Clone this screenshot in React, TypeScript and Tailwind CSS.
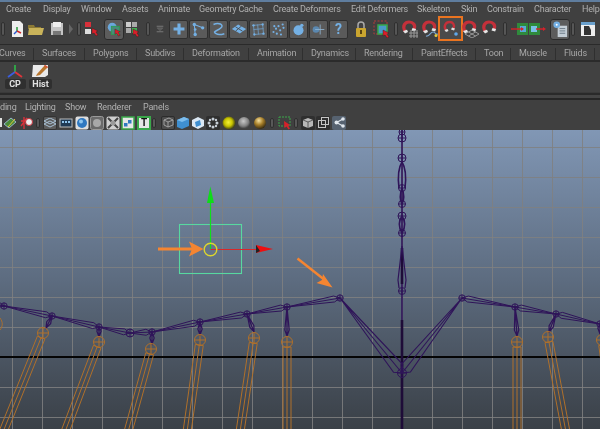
import React from "react";

type P = { children?: React.ReactNode; className?: string };

const S = ({ children, className = "", w = 18, h = 18 }: P & { w?: number; h?: number }) => (
  <svg width={w} height={h} viewBox="0 0 18 18" fill="none" className={"shrink-0 " + className}>
    {children}
  </svg>
);

const Grip = ({ className = "" }: P) => (
  <div className={"shrink-0 w-[4px] h-[14px] rounded-full bg-[#565656] border border-[#2f2f2f] " + className} />
);

const Box = ({ children, className = "" }: P) => (
  <div className={"shrink-0 w-[19px] h-[19px] flex items-center justify-center rounded-[2px] bg-[#5a5a5a] border border-[#303030] " + className}>
    {children}
  </div>
);

const Active = ({ children, className = "" }: P) => (
  <div className={"shrink-0 w-[20px] h-[21px] flex items-center justify-center rounded-[3px] bg-[#5c5c5c] border border-[#2b2b2b] " + className}>
    {children}
  </div>
);

const Blue = "#74b0e4";

const Cursor = ({ x = 10, y = 10 }: { x?: number; y?: number }) => (
  <path d={`M${x} ${y} l6 3 l-2 1 l2 3 l-2 1 l-2 -3 l-2 1 z`} fill="#d8202a" stroke="#222" strokeWidth="0.4" />
);

const MagnetShape = () => (
  <g>
    <path d="M4 11 C1 6 4 2 8 2 C12 2 15 5 13 9" stroke="#c4303a" strokeWidth="3.2" fill="none" />
    <path d="M2 11 l4 -1.2 l1 2.2 l-3 1.4 z" fill="#e6e6e6" />
    <path d="M11.5 8 l3.6 1 l-1 2.6 l-3.6 -1.2 z" fill="#e6e6e6" />
  </g>
);

const Menu = () => {
  const items: [string, string][] = [
    ["Create", "w-[37px]"],
    ["Display", "w-[38px]"],
    ["Window", "w-[41px]"],
    ["Assets", "w-[36px]"],
    ["Animate", "w-[41px]"],
    ["Geometry Cache", "w-[74px]"],
    ["Create Deformers", "w-[78px]"],
    ["Edit Deformers", "w-[66px]"],
    ["Skeleton", "w-[44px]"],
    ["Skin", "w-[26px]"],
    ["Constrain", "w-[47px]"],
    ["Character", "w-[48px]"],
    ["Help", "w-[30px]"],
  ];
  return (
    <div className="h-[15px] shrink-0 flex items-center pl-[6px] pt-[1px] bg-[#404040] text-[#b0b0b0] text-[9px] tracking-[-0.2px] whitespace-nowrap">
      {items.map(([t, w]) => (
        <span key={t} className={"shrink-0 " + w}>{t}</span>
      ))}
    </div>
  );
};

const Toolbar = () => (
  <div className="h-[28px] shrink-0 flex items-center pb-[3px] bg-[#404040] border-b border-[#2a2a2a]">
    <Grip className="ml-[1px]" />
    <S className="ml-[3px]">
      <path d="M4 1 h8 l3 3 v13 H4 z" fill="#eee" />
      <path d="M9 7 v4" stroke="#2a9a3a" strokeWidth="1.5" />
      <path d="M9 11 l-3 3" stroke="#2a5ad0" strokeWidth="1.5" />
      <path d="M9 11 l4 2" stroke="#d02a2a" strokeWidth="1.5" />
    </S>
    <S className="ml-[1px]">
      <path d="M1 5 h6 l1 2 h6 v2 H1 z" fill="#8c7a35" />
      <path d="M2 8 h15 l-2 7 H1 z" fill="#c9b35a" />
    </S>
    <S className="ml-[3px]">
      <path d="M3 3 h12 v12 H3 z" fill="#c4c4c4" />
      <path d="M5 2 h8 v5 H5 z" fill="#eee" />
      <path d="M5 11 h8 v4 H5 z" fill="#777" />
    </S>
    <div className="ml-[3px] w-[4px] h-0 border-y-[5px] border-y-transparent border-l-[4px] border-l-[#666] shrink-0" />
    <Grip className="ml-[4px]" />
    <S className="ml-[2px]">
      <rect x="2" y="2" width="6" height="5" fill="#d8303a" />
      <rect x="2" y="9" width="6" height="5" fill="#ddd" />
      <Cursor x={9} y={8} />
    </S>
    <Active className="ml-[3px]">
      <S w={16} h={16}>
        <circle cx="7" cy="7" r="5" fill="#6aa8dc" />
        <rect x="6" y="6" width="9" height="9" fill="#4a8a7a" stroke="#2aa050" />
        <Cursor x={10} y={9} />
      </S>
    </Active>
    <S>
      <rect x="2" y="2" width="5" height="5" fill="#ccc" />
      <rect x="8" y="2" width="5" height="5" fill="#aaa" />
      <rect x="2" y="8" width="5" height="5" fill="#aaa" />
      <rect x="8" y="8" width="5" height="5" fill="#3fb050" />
      <Cursor x={9} y={9} />
    </S>
    <Grip className="ml-[4px]" />
    <S w={10} h={16} className="ml-[5px]">
      <path d="M3 4 h12 M3 14 h12" stroke="#777" strokeWidth="2" />
      <path d="M4 7 h10 l-5 5 z" fill="#555" stroke="#777" />
    </S>
    <Box className="ml-[4px]">
      <S w={14} h={14}><path d="M9 2 v14 M2 9 h14" stroke={Blue} strokeWidth="4" /></S>
    </Box>
    <Box className="ml-[1px]">
      <S w={15} h={15}>
        <path d="M4 3 L5 15 M4 3 L14 7" stroke={Blue} strokeWidth="1.3" />
        <circle cx="4" cy="3" r="2" fill={Blue} /><circle cx="5" cy="15" r="2" fill={Blue} /><circle cx="14" cy="7" r="2" fill={Blue} /><circle cx="5" cy="9" r="1.6" fill={Blue} />
      </S>
    </Box>
    <Box className="ml-[1px]">
      <S w={15} h={15}><path d="M3 3 C9 0 16 3 12 7 C8 11 1 11 6 14 C9 16 13 15 16 14" stroke={Blue} strokeWidth="1.8" /></S>
    </Box>
    <Box className="ml-[1px]">
      <S w={16} h={16}><path d="M1 9 L8 4 L17 9 L10 14 z" fill={Blue} /><path d="M5 6.5 L13 11.5 M12 5.5 L5 11.5" stroke="#4a4a4a" strokeWidth="1" /></S>
    </Box>
    <Box className="ml-[1px]">
      <S w={15} h={15}>
        <path d="M3 4 L14 3 L15 14 L4 15 z M8 3 L9 15 M3 9 L15 8" stroke="#6f9cc4" strokeWidth="1" />
        <circle cx="3" cy="4" r="1.4" fill={Blue} /><circle cx="14" cy="3" r="1.4" fill={Blue} /><circle cx="15" cy="14" r="1.4" fill={Blue} /><circle cx="4" cy="15" r="1.4" fill={Blue} />
      </S>
    </Box>
    <Box className="ml-[1px]">
      <S w={15} h={15}>
        {[[3,12],[6,8],[9,5],[14,3],[7,14],[11,10],[15,7],[4,5],[12,15]].map(([x,y],i)=>(<circle key={i} cx={x} cy={y} r="1.3" fill={Blue} />))}
      </S>
    </Box>
    <Box className="ml-[1px]">
      <S w={15} h={15}><circle cx="9" cy="10" r="6" fill={Blue} /><circle cx="13" cy="4" r="2" fill={Blue} /></S>
    </Box>
    <Box className="ml-[1px]">
      <S w={15} h={15}><circle cx="6" cy="9" r="4" fill="#5b88b0" /><path d="M11 3 v12 M5 9 h11" stroke="#8fb4d4" strokeWidth="1" /></S>
    </Box>
    <Box className="ml-[1px]">
      <span className="text-[14px] leading-none font-bold text-[#74b0e4]">?</span>
    </Box>
    <S className="ml-[4px]">
      <path d="M6 8 V5 a3 3 0 0 1 6 0 V8" stroke="#aaa" strokeWidth="1.5" />
      <rect x="4" y="8" width="10" height="9" rx="1" fill="#caa52f" />
      <rect x="8" y="10" width="2" height="4" fill="#5a4410" />
    </S>
    <S className="ml-[3px]">
      <rect x="1" y="1" width="13" height="13" stroke="#b33a3a" strokeDasharray="2 1.5" />
      <rect x="5" y="5" width="9" height="9" fill="#4a9ac8" stroke="#37a84a" strokeWidth="1.5" />
      <Cursor x={10} y={10} />
    </S>
    <Grip className="ml-[3px]" />
    <S className="ml-[3px]">
      <MagnetShape />
      <path d="M8 13 h9 M8 16 h9 M10 10 v8 M13 10 v8 M16 10 v8" stroke="#9a9a9a" strokeWidth="1" />
    </S>
    <S className="ml-[2px]">
      <MagnetShape />
      <path d="M5 16 C9 17 9 12 12 12 C15 12 14 15 17 14" stroke="#7aa4cc" strokeWidth="1.2" />
      <circle cx="15" cy="15.5" r="1.5" fill="#e3c93a" />
    </S>
    <div className="-ml-[1px] shrink-0 w-[25px] h-[25px] mt-[-1px] flex items-center justify-center border-2 border-[#ea7420] bg-[#4a4a4a]">
      <S w={18} h={18}>
        <path d="M4 10 C1 6 4 2 7.5 2 C11 2 13 5 11.5 8" stroke="#c4303a" strokeWidth="2.4" />
        <path d="M2.5 10 l3 -1 l1 2 l-2.5 1 z M10 7.5 l3 1 l-1 2 l-3 -1 z" fill="#e0e0e0" />
        <circle cx="14" cy="14" r="1.8" fill="#5fa8ea" />
      </S>
    </div>
    <S className="-ml-[2px]">
      <MagnetShape />
      <path d="M4 14 L11 10 L18 14 L11 18 z M7.5 12 L14.5 16 M14.5 12 L7.5 16" stroke="#a0a0a0" strokeWidth="0.9" />
    </S>
    <S className="ml-[2px]"><MagnetShape /></S>
    <Grip className="ml-[4px]" />
    <S className="ml-[4px]">
      <rect x="6" y="3" width="11" height="12" fill="#2f8a3c" />
      <rect x="9" y="6" width="6" height="6" fill="#58a8d8" />
      <path d="M0 9 h12" stroke="#d8202a" strokeWidth="1.4" />
      <path d="M13 9 l-3 -2 v4 z" fill="#d8202a" />
    </S>
    <S className="-ml-[1px]">
      <rect x="1" y="3" width="11" height="12" fill="#2f8a3c" />
      <rect x="3" y="6" width="6" height="6" fill="#7ac0e8" />
      <path d="M8 9 h8" stroke="#d8202a" strokeWidth="1.4" />
      <path d="M18 9 l-3 -2 v4 z" fill="#d8202a" />
    </S>
    <Active className="ml-[4px]">
      <S w={17} h={17}>
        <rect x="6" y="5" width="10" height="12" fill="#c4ced6" />
        <path d="M8 8 h6 M8 10.5 h6 M8 13 h6" stroke="#6a7a86" strokeWidth="1" />
        <circle cx="5" cy="4" r="3.5" fill="#74b0e4" />
        <circle cx="5" cy="4" r="1" fill="#fff" />
      </S>
    </Active>
    <Grip className="ml-[1px]" />
    <S className="ml-[4px]">
      <rect x="2" y="2" width="14" height="14" fill="#eee" />
      <path d="M2 2 h14 v3 H2 z" fill="#6aa0cc" />
      <path d="M5 6 h5 l2 4 v5 H5 z" fill="#333" />
    </S>
    <S className="ml-[4px]">
      <path d="M2 8 h14 v8 H2 z" fill="#9c9c9c" />
      <path d="M2 7 L15 2 L16 5 L3 9 z" fill="#bcbcbc" />
      <path d="M5 5.7 l2 2 M9 4.2 l2 2 M13 2.8 l1.5 2" stroke="#333" strokeWidth="1.2" />
    </S>
  </div>
);

const Tabs = () => {
  const tabs: [string, string][] = [
    ["Surfaces", "w-[51px]"],
    ["Polygons", "w-[52px]"],
    ["Subdivs", "w-[47px]"],
    ["Deformation", "w-[65px]"],
    ["Animation", "w-[54px]"],
    ["Dynamics", "w-[53px]"],
    ["Rendering", "w-[57px]"],
    ["PaintEffects", "w-[63px]"],
    ["Toon", "w-[35px]"],
    ["Muscle", "w-[45px]"],
    ["Fluids", "w-[39px]"],
  ];
  return (
    <div className="h-[17px] shrink-0 flex bg-[#404040] border-b-2 border-[#2b2b2b] text-[#a6a6a6] text-[9px] tracking-[-0.2px] whitespace-nowrap pt-[3px] overflow-hidden">
      <div className="w-[35px] shrink-0 border-r border-[#2f2f2f] flex items-center -ml-[1px]">Curves</div>
      {tabs.map(([t, w]) => (
        <div key={t} className={"shrink-0 border-r border-[#2f2f2f] flex items-center pl-[8px] " + w}>{t}</div>
      ))}
    </div>
  );
};

const Shelf = () => (
  <div className="h-[30px] shrink-0 flex items-start pt-[2px] pl-[5px] gap-[4px] bg-[#414141]">
    <div className="w-[20px] shrink-0 flex flex-col items-center">
      <svg width="18" height="14" viewBox="0 0 18 14" fill="none">
        <path d="M9 8 V1" stroke="#2fae48" strokeWidth="1.8" />
        <path d="M9 8 L2 13" stroke="#3a5ee0" strokeWidth="1.8" />
        <path d="M9 8 L16 13" stroke="#e0343a" strokeWidth="1.8" />
      </svg>
      <div className="w-[21px] h-[10px] mt-[1px] flex items-center justify-center bg-[#2f2f2f] rounded-[2px] text-[#e0e0e0] text-[9px] font-bold leading-none">CP</div>
    </div>
    <div className="w-[23px] shrink-0 flex flex-col items-center">
      <svg width="19" height="14" viewBox="0 0 19 14" fill="none">
        <path d="M2 1 H17 V11 L14 13 H1 z" fill="#e9e9e9" />
        <path d="M6 10 L14 1 L17 3 L9 11 L5 12 z" fill="#b8762e" />
        <path d="M14 1 L17 3 L16 4 L13 2 z" fill="#d8503a" />
      </svg>
      <div className="w-[23px] h-[10px] mt-[1px] flex items-center justify-center bg-[#2f2f2f] rounded-[2px] text-[#e0e0e0] text-[9px] font-bold leading-none">Hist</div>
    </div>
  </div>
);

const Split = () => (
  <div className="h-[8px] shrink-0 flex flex-col bg-[#3a3a3a]">
    <div className="h-[2px] mt-[1px] bg-[#2a2a2a]" />
    <div className="h-[3px] bg-[#454545]" />
    <div className="h-[2px] bg-[#262626]" />
  </div>
);

const PanelMenu = () => (
  <div className="h-[15px] shrink-0 flex items-center pt-[1px] bg-[#404040] text-[#b0b0b0] text-[9px] tracking-[-0.2px] whitespace-nowrap overflow-hidden">
    <span className="w-[25px] shrink-0 -ml-[3px] pl-[3px]">ding</span>
    <span className="w-[40px] shrink-0 ml-[3px]">Lighting</span>
    <span className="w-[32px] shrink-0">Show</span>
    <span className="w-[46px] shrink-0">Renderer</span>
    <span className="shrink-0">Panels</span>
  </div>
);

const PGrip = ({ className = "" }: P) => (
  <div className={"shrink-0 w-[4px] h-[10px] rounded-full bg-[#585858] border border-[#2f2f2f] " + className} />
);

const Sq = ({ children, className = "" }: P) => (
  <svg width="14" height="14" viewBox="0 0 14 14" fill="none" className={"shrink-0 " + className}>{children}</svg>
);

const PanelBar = () => (
  <div className="h-[15px] shrink-0 flex items-center bg-[#404040]">
    <div className="w-[2px] h-[9px] bg-[#e0e0e0] shrink-0" />
    <Sq className="ml-[1px]">
      <path d="M1 8 L8 2 L13 6 L6 12 z" fill="#4a8a3a" stroke="#a8c8e8" strokeWidth="0.8" />
      <path d="M5 11 L12 3" stroke="#e0c83a" strokeWidth="1" />
    </Sq>
    <Sq className="ml-[3px]">
      <path d="M4 1 V13 M1 5 H7 M1 10 L7 2" stroke="#d8303a" strokeWidth="1.4" />
      <circle cx="9" cy="6" r="3.5" fill="#eee" stroke="#c8303a" />
    </Sq>
    <PGrip className="ml-[2px]" />
    <div className="ml-[3px] w-[14px] h-[14px] shrink-0 flex items-center justify-center bg-[#5c5c5c] rounded-[2px] border border-[#333]">
      <svg width="12" height="10" viewBox="0 0 12 10" fill="none"><path d="M0 3 L6 0 L12 3 L6 6 z M0 6 L6 3 L12 6 L6 9 z" stroke="#a8c0d4" strokeWidth="1" /></svg>
    </div>
    <Sq className="ml-[2px]">
      <rect x="1" y="3" width="12" height="8" fill="#1f3a55" stroke="#bbb" />
      <path d="M3 6 h2 M6 6 h2 M9 6 h2" stroke="#8fc4ec" strokeWidth="2" />
    </Sq>
    <Sq className="ml-[2px]">
      <rect x="0.5" y="0.5" width="13" height="13" rx="2" fill="#ddd" />
      <circle cx="7" cy="7" r="5" fill="#2f78c0" />
      <circle cx="6" cy="5.5" r="2" fill="#8cc4ee" />
    </Sq>
    <Sq className="ml-[1px]">
      <rect x="0.5" y="0.5" width="13" height="13" rx="2" fill="#6a6a6a" stroke="#9a9a9a" />
      <circle cx="7" cy="7" r="4" fill="#a8a8a8" />
    </Sq>
    <Sq className="ml-[2px]">
      <rect x="0.5" y="0.5" width="13" height="13" rx="2" fill="#d0d0d0" />
      <path d="M2 2 L12 12 M12 2 L2 12" stroke="#444" strokeWidth="2" />
      <circle cx="7" cy="7" r="2.5" fill="#999" />
    </Sq>
    <Sq className="ml-[1px]">
      <rect x="1" y="1" width="12" height="12" fill="#e6e6e6" stroke="#3aa84a" strokeWidth="1.5" />
      <rect x="3" y="7" width="3.5" height="3.5" fill="#2f78c0" />
      <rect x="7" y="4" width="3.5" height="3.5" fill="#2f78c0" />
    </Sq>
    <div className="ml-[2px] w-[14px] h-[14px] shrink-0 flex items-center justify-center bg-[#e6e6e6] border-2 border-[#3aa84a] text-[#111] text-[10px] font-bold leading-none">T</div>
    <PGrip className="ml-[1px]" />
    <div className="ml-[5px] w-[14px] h-[14px] shrink-0 flex items-center justify-center bg-[#4c4c4c] rounded-[2px] border border-[#2c2c2c]">
      <svg width="11" height="11" viewBox="0 0 11 11" fill="none"><path d="M1 3 L6 1 L10 3 V8 L5 10 L1 8 z M1 3 L5 5 L10 3 M5 5 V10" stroke="#a8a8a8" strokeWidth="0.9" /></svg>
    </div>
    <Sq className="ml-[1px]">
      <path d="M1 4 L8 1 L13 3 V10 L6 13 L1 11 z" fill="#3f8fd0" />
      <path d="M1 4 L6 6 L13 3 L8 1 z" fill="#7cbcec" />
    </Sq>
    <Sq className="ml-[1px]">
      <path d="M1 4 L7 1 L13 4 V10 L7 13 L1 10 z" fill="#dbe8f4" />
      <path d="M4 6 L9 4 L10 9 L5 11 z" fill="#3f8fd0" />
    </Sq>
    <div className="ml-[1px] w-[14px] h-[14px] shrink-0 flex items-center justify-center bg-[#2f2f2f] rounded-[2px]">
      <svg width="12" height="12" viewBox="0 0 12 12" fill="#c4ccd4">
        <circle cx="6" cy="2" r="1.5" /><circle cx="6" cy="10" r="1.5" /><circle cx="2" cy="6" r="1.5" /><circle cx="10" cy="6" r="1.5" /><circle cx="3" cy="3" r="1.2" /><circle cx="9" cy="3" r="1.2" /><circle cx="3" cy="9" r="1.2" /><circle cx="9" cy="9" r="1.2" />
      </svg>
    </div>
    <Sq className="ml-[2px]">
      <defs><radialGradient id="yl" cx="0.45" cy="0.45" r="0.55"><stop offset="0" stopColor="#f4f13a" /><stop offset="0.55" stopColor="#c8c400" /><stop offset="1" stopColor="#3e3e18" /></radialGradient></defs>
      <circle cx="7" cy="7" r="6.5" fill="url(#yl)" />
    </Sq>
    <Sq className="ml-[1px]">
      <defs><radialGradient id="gy" cx="0.45" cy="0.35" r="0.6"><stop offset="0" stopColor="#c8c8c8" /><stop offset="0.7" stopColor="#808080" /><stop offset="1" stopColor="#444" /></radialGradient></defs>
      <circle cx="7" cy="7" r="6" fill="url(#gy)" />
    </Sq>
    <Sq className="ml-[2px]">
      <defs><radialGradient id="gd" cx="0.4" cy="0.3" r="0.7"><stop offset="0" stopColor="#f4e0a0" /><stop offset="0.5" stopColor="#a8802a" /><stop offset="1" stopColor="#3a2c10" /></radialGradient></defs>
      <circle cx="7" cy="7" r="6" fill="url(#gd)" />
    </Sq>
    <PGrip className="ml-[3px]" />
    <Sq className="ml-[4px]">
      <rect x="1" y="1" width="11" height="9" stroke="#3aa84a" strokeDasharray="2 1" />
      <path d="M6 5 l6 4 l-2 1 l2 2.5 l-1.5 1 l-2 -3 l-2 1.5 z" fill="#d8202a" />
    </Sq>
    <PGrip className="ml-[2px]" />
    <div className="ml-[3px] w-[14px] h-[14px] shrink-0 flex items-center justify-center bg-[#2f2f2f] rounded-[2px]">
      <svg width="12" height="12" viewBox="0 0 12 12" fill="none"><path d="M1 3 L6 1 L11 3 V9 L6 11 L1 9 z" fill="#b8b8b8" /><path d="M1 3 L6 5 L11 3 M6 5 V11" stroke="#444" strokeWidth="0.8" /></svg>
    </div>
    <div className="ml-[1px] w-[14px] h-[14px] shrink-0 flex items-center justify-center bg-[#2f2f2f] rounded-[2px]">
      <svg width="11" height="11" viewBox="0 0 11 11" fill="none"><rect x="0.5" y="3.5" width="7" height="7" stroke="#c4c4c4" /><rect x="3.5" y="0.5" width="7" height="7" stroke="#c4c4c4" /></svg>
    </div>
    <div className="ml-[2px] w-[14px] h-[14px] shrink-0 flex items-center justify-center bg-[#566270] rounded-[2px]">
      <svg width="11" height="11" viewBox="0 0 11 11" fill="#dfe6ec"><circle cx="2.5" cy="5.5" r="2" /><circle cx="9" cy="2" r="1.8" /><circle cx="9" cy="9" r="1.8" /><path d="M2.5 5.5 L9 2 M2.5 5.5 L9 9" stroke="#dfe6ec" strokeWidth="1.2" /></svg>
    </div>
  </div>
);

const PURPLE = "#2f1459";
const ORANGE = "#b0702a";

const Bone = ({ a, b, w = 3, sw = 1 }: { a: number[]; b: number[]; w?: number; sw?: number }) => {
  const dx = b[0] - a[0];
  const dy = b[1] - a[1];
  const l = Math.hypot(dx, dy);
  const px = (-dy / l) * w;
  const py = (dx / l) * w;
  const mx = a[0] + (dx / l) * 6;
  const my = a[1] + (dy / l) * 6;
  const d = `M${a[0]} ${a[1]} L${mx + px} ${my + py} L${b[0]} ${b[1]} L${mx - px} ${my - py} Z M${a[0]} ${a[1]} L${b[0]} ${b[1]}`;
  return <path d={d} stroke={PURPLE} strokeWidth={sw} fill="none" />;
};

const Joint = ({ p, r = 3.5, c = PURPLE }: { p: number[]; r?: number; c?: string }) => (
  <g stroke={c} strokeWidth="1" fill="none">
    <circle cx={p[0]} cy={p[1]} r={r} />
    <path d={`M${p[0] - r} ${p[1]} H${p[0] + r} M${p[0]} ${p[1] - r} V${p[1] + r}`} />
  </g>
);

const Leg = ({ a, b }: { a: number[]; b: number[] }) => {
  const dx = b[0] - a[0];
  const dy = b[1] - a[1];
  const l = Math.hypot(dx, dy);
  const ux = dx / l;
  const uy = dy / l;
  const sx = a[0] + ux * 5;
  const sy = a[1] + uy * 5;
  const ex = -uy;
  const ey = ux;
  const w = 4;
  const d = `M${sx + ex * w} ${sy + ey * w} L${b[0] + ex * w} ${b[1] + ey * w} M${sx - ex * w} ${sy - ey * w} L${b[0] - ex * w} ${b[1] - ey * w} M${sx} ${sy} L${b[0]} ${b[1]} M${sx + ex * w} ${sy + ey * w} L${sx - ex * w} ${sy - ey * w}`;
  return (
    <g>
      <Joint p={a} r={5.5} c={ORANGE} />
      <path d={d} stroke={ORANGE} strokeWidth="1" fill="none" />
    </g>
  );
};

const Viewport = () => {
  const vs = Array.from({ length: 20 }, (_, i) => 12 + i * 30);
  const hs = [147.5, 177.5, 207.5, 237.5, 267.5, 297.5, 327.5, 387.5, 417.5];
  const chain = [
    [-14, 302], [4, 306], [52, 316], [99, 327], [130, 333], [152, 332], [200, 322], [247, 314], [287, 307], [340, 298],
  ];
  const right = [[462, 298], [515, 307], [556, 314], [600, 324]];
  const hip = [402, 373];
  const legs: number[][][] = [
    [[43, 333], [3, 432]],
    [[99, 342], [65, 432]],
    [[151, 349], [128, 432]],
    [[200, 340], [187, 432]],
    [[254, 338], [240, 432]],
    [[287, 342], [287, 432]],
    [[517, 342], [517, 432]],
    [[548, 337], [566, 432]],
    [[602, 340], [615, 432]],
  ];
  const hang: number[][][] = [
    [[52, 316], [46, 328]],
    [[99, 327], [99, 337]],
    [[152, 332], [152, 344]],
    [[200, 322], [200, 335]],
    [[247, 314], [254, 332]],
    [[287, 307], [287, 336]],
    [[515, 307], [517, 336]],
    [[556, 314], [549, 332]],
    [[600, 324], [600, 334]],
  ];
  return (
    <div className="flex-1 min-h-0 relative overflow-hidden bg-gradient-to-b from-[#8197b5] via-[#5d6c80] to-[#3a4047]">
      <svg width="600" height="299" viewBox="0 130 600 299" fill="none" className="absolute inset-0">
        <g stroke="#808080" strokeOpacity="0.85" strokeWidth="1">
          {vs.map((x) => (<path key={x} d={`M${x + 0.5} 130 V429`} />))}
          {hs.map((y) => (<path key={y} d={`M0 ${y} H600`} />))}
        </g>
        <path d="M0 357 H600" stroke="#050505" strokeWidth="1.8" />

        {/* spine */}
        <path d="M402 130 V429" stroke={PURPLE} strokeWidth="1.6" />
        <path d="M402 248 V284 M402 320 V429" stroke="#1e0c38" strokeWidth="2.6" />
        <path d="M402 246 L398 280 L399 288 M402 246 L406 280 L405 288" stroke={PURPLE} strokeWidth="1.2" />
        <path d="M402 162 C397 170 398 180 399 188 M402 162 C407 170 406 180 405 188 M402 188 C399 196 400 200 402 204 M402 188 C405 196 404 200 402 204 M402 216 C398 222 399 228 402 233 M402 216 C406 222 405 228 402 233" stroke={PURPLE} strokeWidth="1.6" />
        {[[132, 3], [138, 4], [158, 4], [188, 3.5], [204, 3.5], [216, 4], [233, 3.5], [291, 3.5]].map(([y, r]) => (
          <Joint key={y} p={[402, y]} r={r} />
        ))}

        {/* left arm */}
        {chain.slice(0, -1).map((p, i) => (
          <Bone key={i} a={chain[i + 1]} b={p} w={3} />
        ))}
        {chain.slice(1).map((p, i) => (<Joint key={i} p={p} r={i === 3 ? 4 : 3.2} />))}

        {/* right arm */}
        {right.slice(0, -1).map((p, i) => (
          <Bone key={i} a={p} b={right[i + 1]} w={3} />
        ))}
        {right.map((p, i) => (<Joint key={i} p={p} r={3.2} />))}

        {/* V */}
        <Bone a={hip} b={[340, 298]} w={6} sw={1.1} />
        <Bone a={hip} b={[462, 298]} w={6} sw={1.1} />
        <Joint p={hip} r={4.5} />

        {hang.map(([a, b], i) => (<Bone key={i} a={b} b={a} w={2.2} sw={1.2} />))}
        {legs.map(([a, b], i) => (<Leg key={i} a={a} b={b} />))}
        <path d="M0 318 C3 322 3 326 0 330" stroke={ORANGE} strokeWidth="0.9" />

        {/* manipulator */}
        <rect x="179.5" y="224.5" width="62" height="49" stroke="#58d8a0" strokeWidth="1.1" />
        <path d="M210.5 202 V249" stroke="#10e01a" strokeWidth="1.2" />
        <path d="M210.3 186.5 L214 203 L207 203 Z" fill="#0fdc19" />
        <path d="M210.5 249.5 H257" stroke="#d8282a" strokeWidth="1.2" />
        <path d="M273 249 L256 245 L256 253 Z" fill="#ee0f10" />
        <path d="M256 245 L256 253 L260 251 Z" fill="#222" />
        <circle cx="210.5" cy="249.5" r="6.3" stroke="#dcd62e" strokeWidth="1.4" />

        {/* call-outs */}
        <path d="M158 249 H195" stroke="#f58531" strokeWidth="3" />
        <path d="M203.5 249 L189 241.5 L192 249 L189 256.5 Z" fill="#f58531" />
        <path d="M297.5 258.5 L326 281" stroke="#f58531" strokeWidth="2.4" />
        <path d="M332.5 287.5 L323 274 L322 280 L316.5 283 Z" fill="#f58531" />
      </svg>
    </div>
  );
};

export default function App() {
  return (
    <div className="w-[600px] h-[429px] overflow-hidden bg-[#404040]">
      <div className="w-full h-full flex flex-col blur-[0.4px] font-['Roboto',sans-serif]">
        <div className="h-[2px] shrink-0 bg-[#5f7d9e]" />
        <Menu />
        <Toolbar />
        <Tabs />
        <Shelf />
        <Split />
        <PanelMenu />
        <PanelBar />
        <Viewport />
      </div>
    </div>
  );
}
